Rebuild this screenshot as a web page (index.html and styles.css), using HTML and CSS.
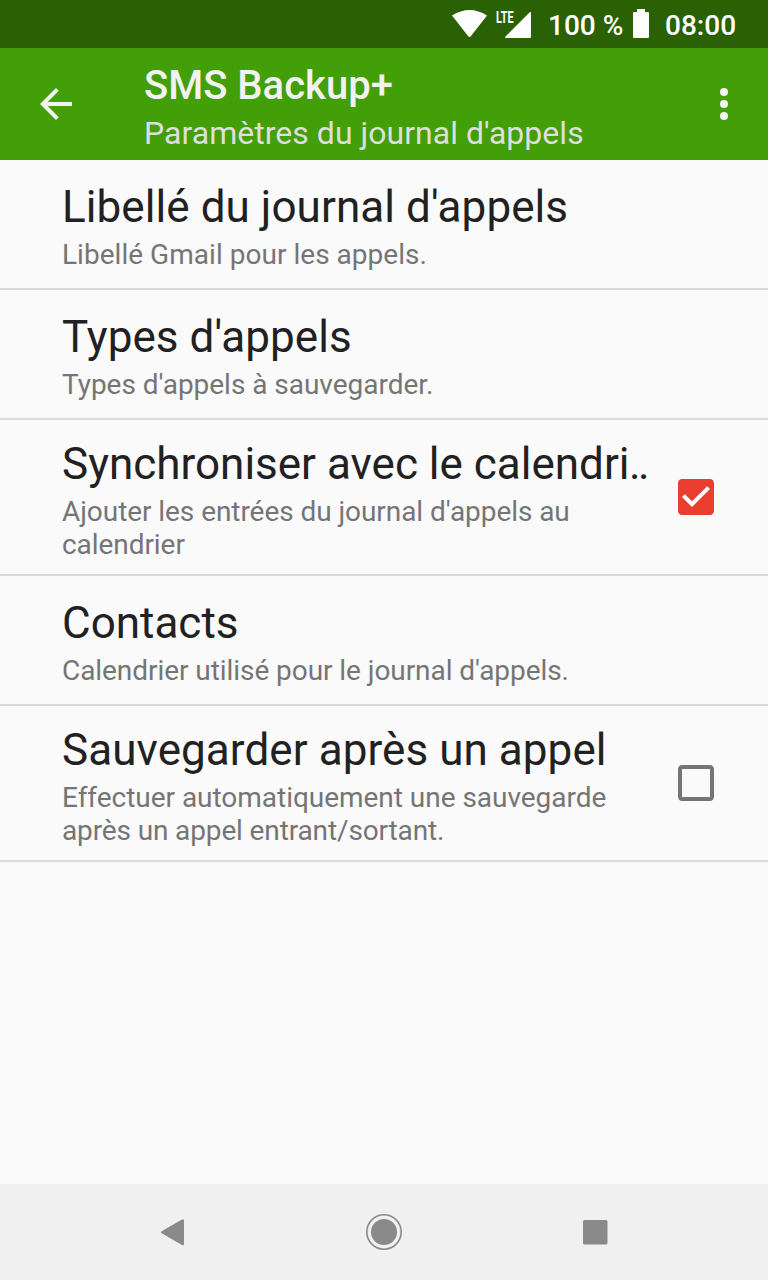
FILE: index.html
```html
<!DOCTYPE html>
<html lang="fr">
<head>
<meta charset="utf-8">
<title>SMS Backup+</title>
<link rel="stylesheet" href="styles.css">
</head>
<body>
<div class="screen">
  <div class="status">
    <svg class="wifi" width="36" height="28" viewBox="0 0 36 28"><path d="M0 5.500Q17.500-5.500 35 5.500L19 26Q17.500 28 16 26Z"/></svg>
    <div class="signal"><span class="lte">LTE</span><svg width="36" height="30" viewBox="0 0 36 30"><path d="M33.500 3.500Q35 2.500 35 4V28Q35 29 34 29H10Q8.500 29 9.500 27.500Z"/></svg></div>
    <span class="percent">100 %</span>
    <svg class="battery" width="16" height="29" viewBox="0 0 16 29"><path d="M4 0h8v3h3q1 0 1 1v24q0 1-1 1H1q-1 0-1-1V4q0-1 1-1h3z"/></svg>
    <span class="clock">08:00</span>
  </div>
  <header class="appbar">
    <svg class="back" width="48" height="48" viewBox="0 0 24 24"><path d="M20 11H7.830l5.590-5.590L12 4l-8 8 8 8 1.410-1.410L7.830 13H20z"/></svg>
    <div class="heading"><h1>SMS Backup+</h1><p>Paramètres du journal d'appels</p></div>
    <svg class="more" width="48" height="48" viewBox="0 0 24 24"><circle cx="12" cy="6" r="2"/><circle cx="12" cy="12" r="2"/><circle cx="12" cy="18" r="2"/></svg>
  </header>
  <main class="list">
    <div class="row"><div class="text"><h2>Libellé du journal d'appels</h2><p class="loose">Libellé Gmail pour les appels.</p></div></div>
    <div class="row"><div class="text"><h2>Types d'appels</h2><p>Types d'appels à sauvegarder.</p></div></div>
    <div class="row tall"><div class="text"><h2 class="clipped">Synchroniser avec le calendri<span class="dots">..</span></h2><p class="tight">Ajouter les entrées du journal d'appels au calendrier</p></div>
      <svg class="check on" width="36" height="36" viewBox="3 3 18 18"><path class="tick" d="M4 4h16v16H4z"/><path d="M19 3H5c-1.110 0-2 .9-2 2v14c0 1.100.89 2 2 2h14c1.110 0 2-.9 2-2V5c0-1.100-.89-2-2-2zm-9 14l-5-5 1.410-1.410L10 14.170l7.590-7.590L19 8l-9 9z"/></svg></div>
    <div class="row"><div class="text"><h2 class="clipped">Contacts</h2><p class="tight">Calendrier utilisé pour le journal d'appels.</p></div></div>
    <div class="row tall"><div class="text"><h2>Sauvegarder après un appel</h2><p>Effectuer automatiquement une sauvegarde <span class="tighter">après un appel entrant/sortant.</span></p></div>
      <svg class="check" width="36" height="36" viewBox="3 3 18 18"><path d="M19 5v14H5V5h14m0-2H5c-1.100 0-2 .9-2 2v14c0 1.100.9 2 2 2h14c1.100 0 2-.9 2-2V5c0-1.100-.9-2-2-2z"/></svg></div>
  </main>
  <nav class="navbar">
    <svg width="36" height="36" viewBox="0 0 36 36"><path d="M7 17Q5 18.300 7 19.500L27 31Q29 32 29 30V7Q29 4.500 27 5.500Z"/></svg>
    <svg width="36" height="36" viewBox="0 0 36 36"><circle cx="18" cy="18" r="13"/><circle class="ring" cx="18" cy="18" r="17.200"/></svg>
    <svg width="36" height="36" viewBox="0 0 36 36"><rect x="6" y="6" width="24.500" height="24.500" rx="1.500"/></svg>
  </nav>
</div>
</body>
</html>
```
FILE: styles.css
```css
* { box-sizing: border-box; margin: 0; padding: 0; }
body { background: #fafafa; font-family: Roboto, sans-serif; }
svg { display: block; flex: none; }
.screen { width: 768px; height: 1280px; display: flex; flex-direction: column; }
.status { height: 48px; background: #296104; display: flex; padding-left: 452px; color: #fff; fill: #fff; font-size: 28px; font-weight: 500; line-height: 51px; white-space: nowrap; }
.wifi { margin-top: 10px; }
.signal { position: relative; width: 36px; margin: 9px 0 0 8px; }
.lte { position: absolute; left: 0; top: 0; font-size: 17px; line-height: 17px; font-weight: 700; transform: scaleX(.64); transform-origin: left; }
.percent { width: 85px; margin-left: 16px; }
.battery { margin-top: 9px; }
.clock { margin-left: 16px; }
.appbar { height: 112px; background: #439f07; color: #f2f2f2; fill: #f2f2f2; display: flex; align-items: center; padding: 0 20px 0 32px; }
.heading { flex: 1; margin-left: 64px; padding-top: 11px; }
.heading h1 { font-size: 40px; line-height: 48px; font-weight: 500; }
.heading p { font-size: 32px; line-height: 47px; color: #dedede; letter-spacing: .03px; }
.list { flex: 1; }
.row { height: 130px; border-bottom: 2px solid #dadada; display: flex; align-items: center; padding: 0 54px 0 62px; }
.row.tall { height: 156px; }
.text { width: 588px; margin-right: 28px; padding-top: 4px; }
.tall .text { padding-top: 5px; }
.row h2 { font-size: 44px; line-height: 52px; font-weight: 400; color: #212121; white-space: nowrap; letter-spacing: .07px; margin: -1px 0 1px; }
.row h2.clipped { letter-spacing: 0; }
.dots { letter-spacing: -2.600px; margin-left: -.5px; }
.row p { font-size: 28px; line-height: 33px; color: #757575; padding-top: 4px; letter-spacing: -.03px; }
.row p.loose { letter-spacing: .03px; }
.row p.tight { letter-spacing: -.06px; }
.tighter { letter-spacing: -.13px; }
.check { fill: #757575; }
.check.on { fill: #ea3d2f; }
.tick { fill: #fff; }
.navbar { height: 96px; background: #f0f0f0; fill: #8a8a8a; display: flex; align-items: center; justify-content: space-between; padding: 0 155px; }
.ring { fill: none; stroke: #8a8a8a; stroke-width: 1.6; }
```
